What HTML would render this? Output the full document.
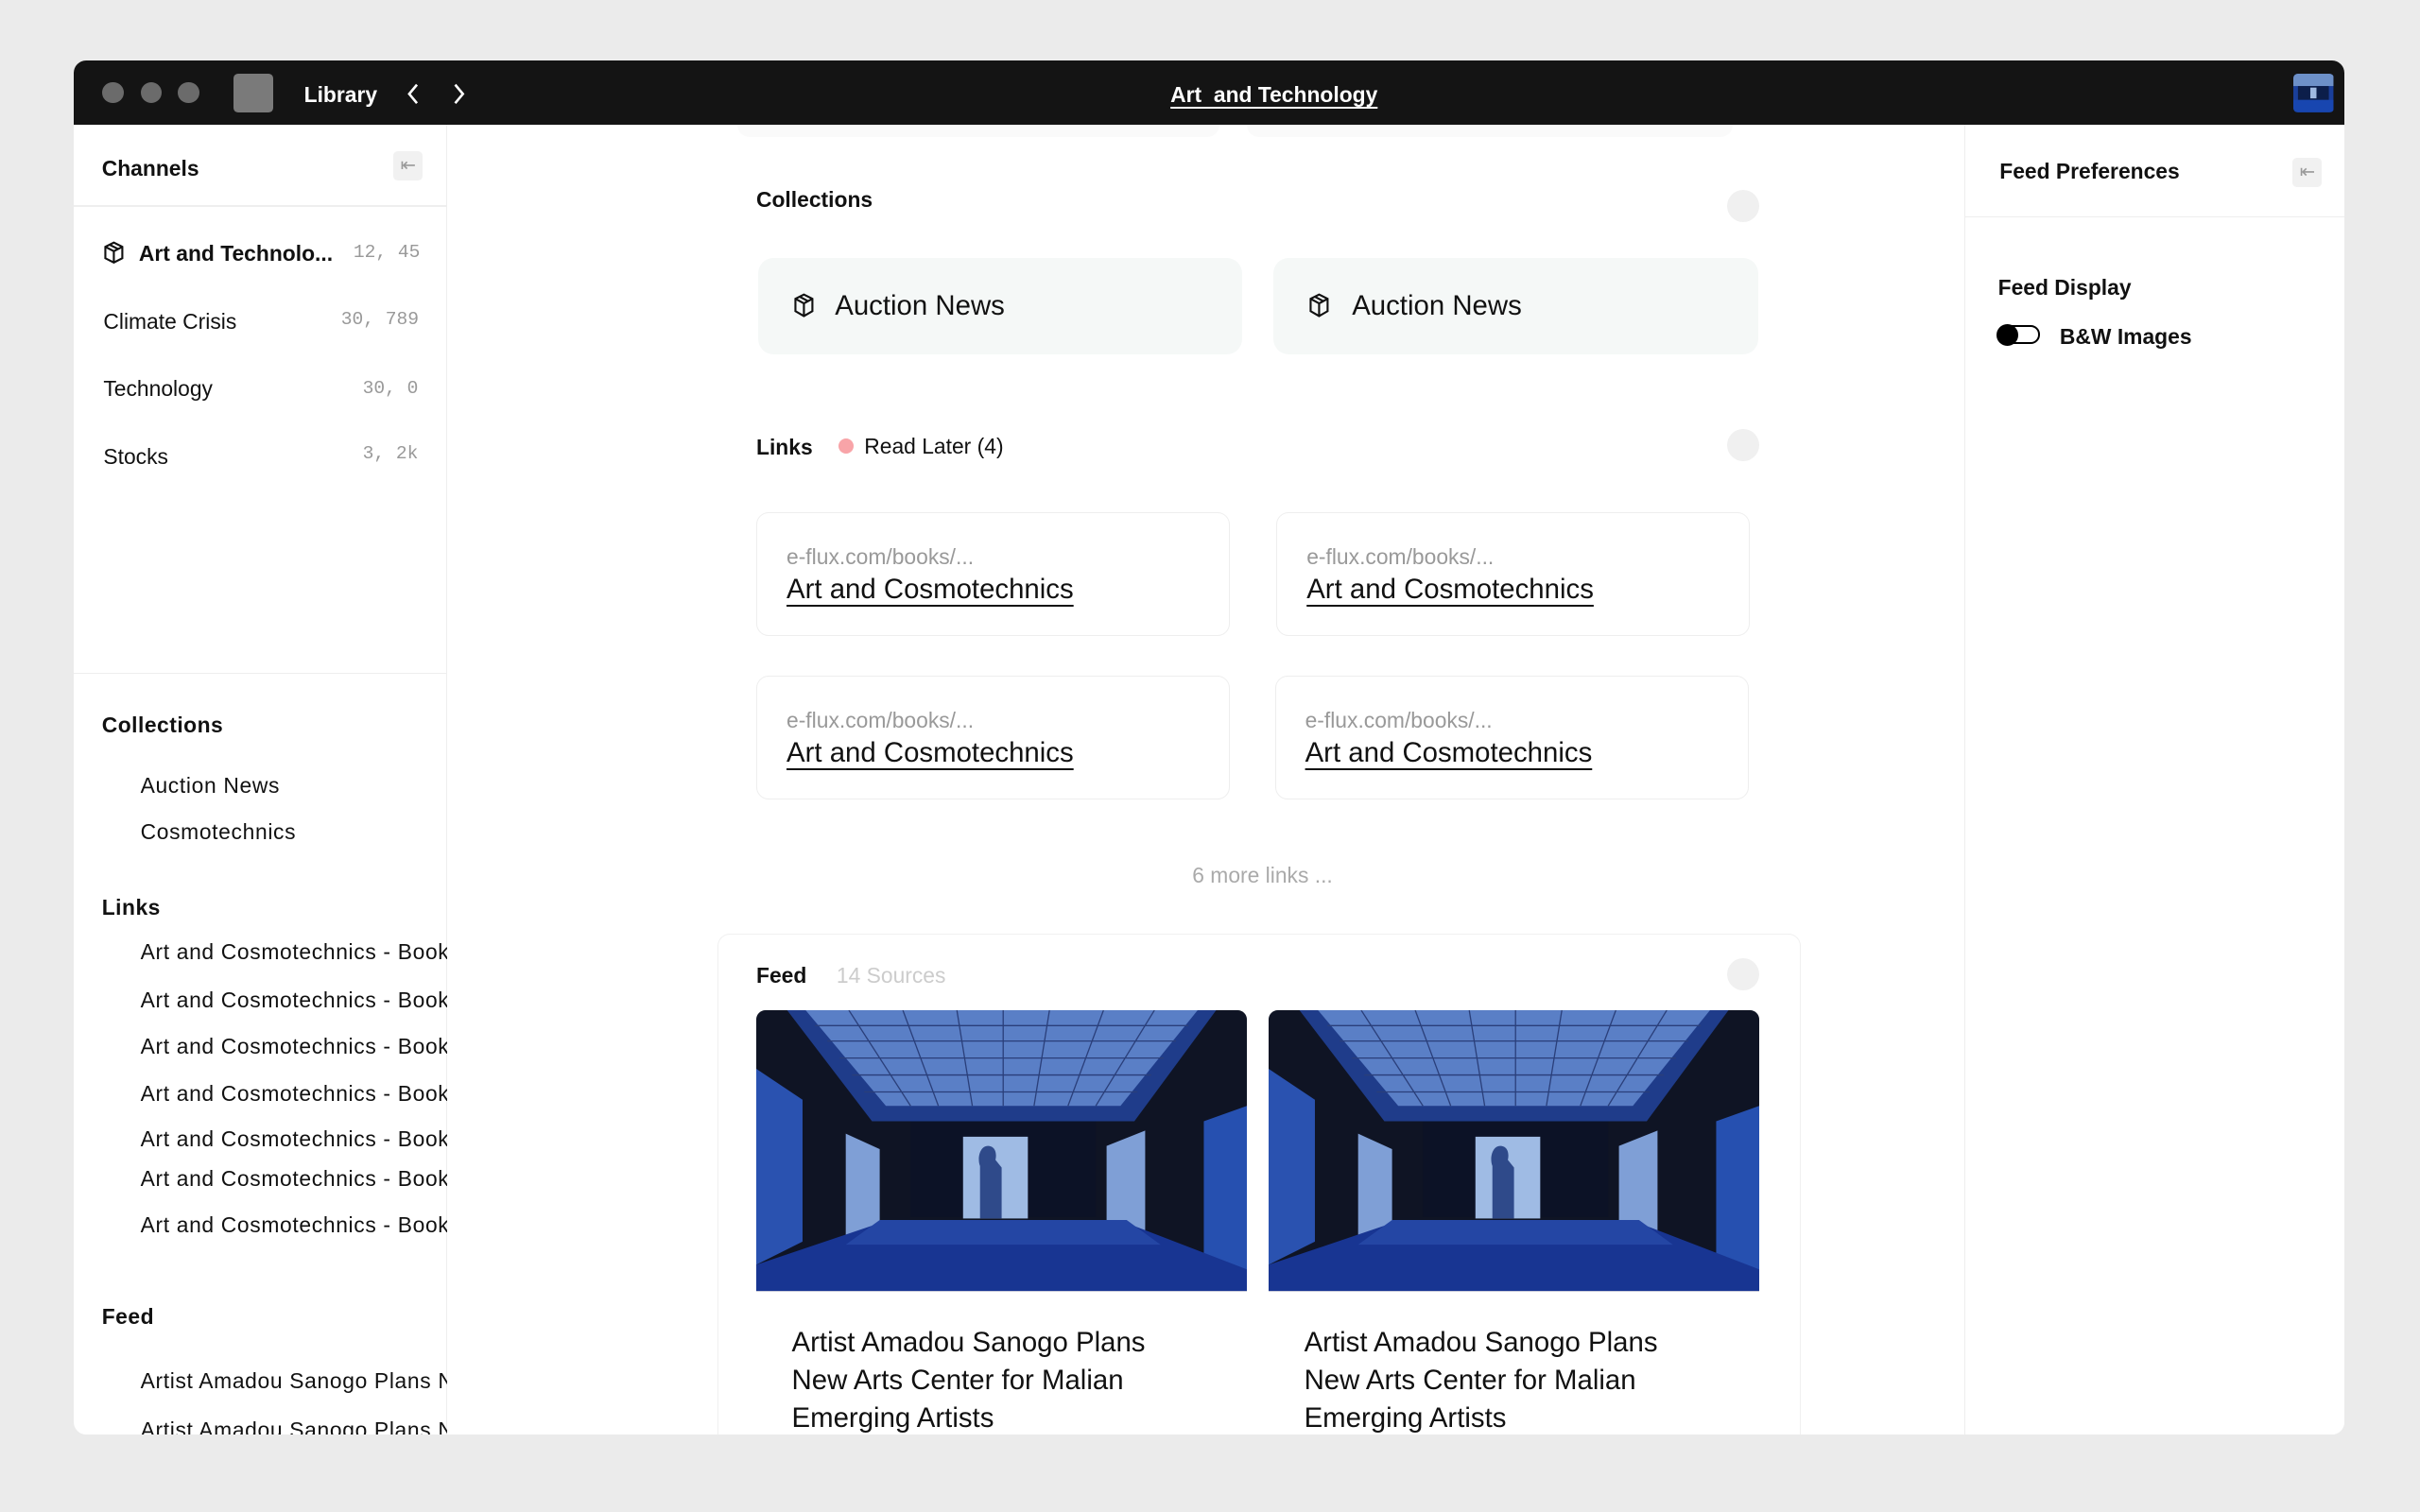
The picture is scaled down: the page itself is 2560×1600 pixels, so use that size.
<!DOCTYPE html>
<html><head><meta charset="utf-8">
<style>
*{margin:0;padding:0;box-sizing:border-box}
html,body{width:2560px;height:1600px;overflow:hidden;background:#ebebeb}
#s{width:1568px;height:980px;zoom:1.632653;position:relative;font-family:"Liberation Sans",sans-serif;color:#111}
.a{position:absolute}
.win{left:48px;top:39px;width:1471px;height:891px;background:#fff;border-radius:8px;overflow:hidden}
.bar{left:0;top:0;width:1471px;height:42px;background:#141414}
.dot{width:14px;height:14px;border-radius:50%;background:#6b6b6b;top:14px}
.b{font-weight:bold}
.mono{font-family:"Liberation Mono",monospace;color:#999;font-size:12px}
.colbox{background:#f5f8f7;border-radius:10px;width:314px;height:63px}
.lnk{border:1px solid #eee;border-radius:8px;width:307px;height:80px}
.url{font-size:14px;color:#999;left:19px;top:20px}
.tt{font-size:18px;left:19px;top:39px;text-decoration:underline;text-underline-offset:4px}
.circ{width:21px;height:21px;border-radius:50%;background:#f0f0f0}
.sl{font-size:14px;letter-spacing:.4px;left:43px}
.ft{font-size:18px;line-height:24.5px}
.btn{width:19px;height:19px;background:#f1f1f1;border-radius:3px;color:#999;font-size:12px;text-align:center;line-height:19px}
</style></head><body><div id="s">
<div class="a win">
 <div class="a bar">
  <div class="a dot" style="left:18px"></div><div class="a dot" style="left:43px"></div><div class="a dot" style="left:67px"></div>
  <div class="a" style="left:103px;top:9px;width:26px;height:25px;background:#7a7a7a;border-radius:3px"></div>
  <div class="a b" style="left:149px;top:14px;color:#fff;font-size:14px">Library</div>
  <svg class="a" style="left:214px;top:15px" width="12" height="14" viewBox="0 0 12 14"><path d="M8 1 3 7l5 6" fill="none" stroke="#fff" stroke-width="1.6"/></svg>
  <svg class="a" style="left:243px;top:15px" width="12" height="14" viewBox="0 0 12 14"><path d="M4 1l5 6-5 6" fill="none" stroke="#fff" stroke-width="1.6"/></svg>
  <div class="a b" style="left:0;width:1555px;text-align:center;top:14px;color:#fff;font-size:14px;text-decoration:underline;text-underline-offset:3px">Art&nbsp; and Technology</div>
  <svg class="a" style="left:1438px;top:9px;border-radius:3px" width="26" height="25" viewBox="0 0 26 25"><rect width="26" height="25" fill="#1a3f9a"/><rect width="26" height="8" fill="#6d90c8"/><rect x="3" y="8" width="20" height="9" fill="#0c1e4a"/><rect x="11" y="9" width="4" height="7" fill="#9fb9e0"/><rect x="0" y="17" width="26" height="8" fill="#1846b0"/></svg>
 </div>
 <!-- left sidebar -->
 <div class="a" style="left:0;top:42px;width:242px;height:849px;border-right:1px solid #eee">
  <div class="a b" style="left:18px;top:20px;font-size:14px">Channels</div>
  <div class="a btn" style="left:207px;top:17px">&#8676;</div>
  <div class="a" style="left:0;top:52px;width:242px;height:1px;background:#eee"></div>
  <svg class="a" style="left:19px;top:75px" width="14" height="15" viewBox="0 0 14 15"><path d="M7 1 1.5 3.8v7.4L7 14l5.5-2.8V3.8z M1.5 3.8 7 6.6l5.5-2.8 M7 6.6V14 M4.2 2.4l5.5 2.8" fill="none" stroke="#111" stroke-width="1.3"/></svg>
  <div class="a b" style="left:42px;top:75px;font-size:14px">Art and Technolo...</div>
  <div class="a mono" style="left:181px;top:76px">12, 45</div>
  <div class="a" style="left:19px;top:119px;font-size:14px">Climate Crisis</div><div class="a mono" style="left:173px;top:119px">30, 789</div>
  <div class="a" style="left:19px;top:163px;font-size:14px">Technology</div><div class="a mono" style="left:187px;top:164px">30, 0</div>
  <div class="a" style="left:19px;top:207px;font-size:14px">Stocks</div><div class="a mono" style="left:187px;top:206px">3, 2k</div>
  <div class="a" style="left:0;top:355px;width:242px;height:1px;background:#eee"></div>
  <div class="a b" style="left:18px;top:381px;font-size:14px;letter-spacing:.3px">Collections</div>
  <div class="a sl" style="top:420px">Auction News</div>
  <div class="a sl" style="top:450px">Cosmotechnics</div>
  <div class="a b" style="left:18px;top:499px;font-size:14px;letter-spacing:.3px">Links</div>
  <div class="a sl" style="top:528px;white-space:nowrap">Art and Cosmotechnics - Books</div>
  <div class="a sl" style="top:559px;white-space:nowrap">Art and Cosmotechnics - Books</div>
  <div class="a sl" style="top:589px;white-space:nowrap">Art and Cosmotechnics - Books</div>
  <div class="a sl" style="top:620px;white-space:nowrap">Art and Cosmotechnics - Books</div>
  <div class="a sl" style="top:649px;white-space:nowrap">Art and Cosmotechnics - Books</div>
  <div class="a sl" style="top:675px;white-space:nowrap">Art and Cosmotechnics - Books</div>
  <div class="a sl" style="top:705px;white-space:nowrap">Art and Cosmotechnics - Books</div>
  <div class="a b" style="left:18px;top:764px;font-size:14px;letter-spacing:.3px">Feed</div>
  <div class="a sl" style="top:806px;white-space:nowrap">Artist Amadou Sanogo Plans New</div>
  <div class="a sl" style="top:838px;white-space:nowrap">Artist Amadou Sanogo Plans New</div>
  <div class="a" style="left:242px;top:0;width:60px;height:849px;background:#fff"></div>
 </div>
 <!-- main -->
 <div class="a" style="left:430px;top:42px;width:312px;height:8px;background:#fafafa;border-radius:0 0 8px 8px"></div>
 <div class="a" style="left:760px;top:42px;width:315px;height:8px;background:#fafafa;border-radius:0 0 8px 8px"></div>
 <div class="a b" style="left:442px;top:82px;font-size:14px">Collections</div>
 <div class="a circ" style="left:1071px;top:84px"></div>
 <div class="a colbox" style="left:443px;top:128px"></div>
 <div class="a colbox" style="left:777px;top:128px"></div>
 <svg class="a" style="left:466px;top:151px" width="14" height="16" viewBox="0 0 14 16"><path d="M7 1 1.5 3.8v8L7 15l5.5-3.2v-8z M1.5 3.8 7 6.8l5.5-3 M7 6.8V15 M4.2 2.4l5.5 2.9" fill="none" stroke="#111" stroke-width="1.3"/></svg>
 <div class="a" style="left:493px;top:149px;font-size:18px">Auction News</div>
 <svg class="a" style="left:800px;top:151px" width="14" height="16" viewBox="0 0 14 16"><path d="M7 1 1.5 3.8v8L7 15l5.5-3.2v-8z M1.5 3.8 7 6.8l5.5-3 M7 6.8V15 M4.2 2.4l5.5 2.9" fill="none" stroke="#111" stroke-width="1.3"/></svg>
 <div class="a" style="left:828px;top:149px;font-size:18px">Auction News</div>
 <div class="a b" style="left:442px;top:243px;font-size:14px">Links</div>
 <div class="a" style="left:495px;top:245px;width:10px;height:10px;border-radius:50%;background:#f8a4a8"></div>
 <div class="a" style="left:512px;top:242px;font-size:14px">Read Later (4)</div>
 <div class="a circ" style="left:1071px;top:239px"></div>
 <div class="a lnk" style="left:442px;top:293px"><div class="a url">e-flux.com/books/...</div><div class="a tt">Art and Cosmotechnics</div></div>
 <div class="a lnk" style="left:779px;top:293px"><div class="a url">e-flux.com/books/...</div><div class="a tt">Art and Cosmotechnics</div></div>
 <div class="a lnk" style="left:442px;top:399px"><div class="a url">e-flux.com/books/...</div><div class="a tt">Art and Cosmotechnics</div></div>
 <div class="a lnk" style="left:778px;top:399px"><div class="a url">e-flux.com/books/...</div><div class="a tt">Art and Cosmotechnics</div></div>
 <div class="a" style="left:0;width:1540px;text-align:center;top:520px;font-size:14px;color:#aaa">6 more links ...</div>
 <div class="a" style="left:417px;top:566px;width:702px;height:340px;border:1px solid #f0f0f0;border-radius:8px"></div>
 <div class="a b" style="left:442px;top:585px;font-size:14px">Feed</div>
 <div class="a" style="left:494px;top:585px;font-size:14px;color:#ccc">14 Sources</div>
 <div class="a circ" style="left:1071px;top:582px"></div>
 <svg width="0" height="0" style="position:absolute"><defs><g id="room">
  <rect width="318" height="182" fill="#0f1424"/>
  <polygon points="20,0 298,0 245,72 75,72" fill="#1f3c8a"/>
  <polygon points="32,0 286,0 236,62 84,62" fill="#5a7fc6"/>
  <g stroke="#2a3f7a" stroke-width="0.8">
   <line x1="60" y1="0" x2="100" y2="62"/><line x1="95" y1="0" x2="118" y2="62"/><line x1="130" y1="0" x2="140" y2="62"/><line x1="160" y1="0" x2="160" y2="62"/><line x1="190" y1="0" x2="180" y2="62"/><line x1="225" y1="0" x2="202" y2="62"/><line x1="258" y1="0" x2="220" y2="62"/>
   <line x1="38" y1="10" x2="280" y2="10"/><line x1="46" y1="20" x2="272" y2="20"/><line x1="54" y1="31" x2="264" y2="31"/><line x1="62" y1="42" x2="256" y2="42"/><line x1="70" y1="53" x2="247" y2="53"/>
  </g>
  <rect x="100" y="72" width="120" height="62" fill="#0c1226"/>
  <rect x="134" y="82" width="42" height="53" fill="#9fbbe4"/>
  <path d="M150 88c5 0 6 5 5 9l4 5v33h-14v-34c-2-5 0-13 5-13z" fill="#2f4a8a"/>
  <polygon points="0,38 30,58 30,150 0,165" fill="#2a52b0"/>
  <polygon points="58,80 80,90 80,140 58,150" fill="#7f9fd6"/>
  <polygon points="227,88 252,78 252,150 227,140" fill="#7f9fd6"/>
  <polygon points="290,72 318,62 318,182 290,170" fill="#2650b0"/>
  <polygon points="0,182 0,165 80,138 240,138 318,168 318,182" fill="#183592"/>
  <polygon points="80,136 240,136 262,152 58,152" fill="#2446a4"/>
 </g></defs></svg>
 <svg class="a" style="left:442px;top:616px;border-radius:6px 6px 0 0" width="318" height="182" viewBox="0 0 318 182"><use href="#room"/></svg>
 <svg class="a" style="left:774px;top:616px;border-radius:6px 6px 0 0" width="318" height="182" viewBox="0 0 318 182"><use href="#room"/></svg>
 <div class="a ft" style="left:465px;top:819px">Artist Amadou Sanogo Plans<br>New Arts Center for Malian<br>Emerging Artists</div>
 <div class="a ft" style="left:797px;top:819px">Artist Amadou Sanogo Plans<br>New Arts Center for Malian<br>Emerging Artists</div>
 <!-- right panel -->
 <div class="a" style="left:1225px;top:42px;width:246px;height:849px;border-left:1px solid #eee;background:#fff">
  <div class="a b" style="left:22px;top:22px;font-size:14px">Feed Preferences</div>
  <div class="a btn" style="left:212px;top:21px">&#8676;</div>
  <div class="a" style="left:0;top:59px;width:246px;height:1px;background:#eee"></div>
  <div class="a b" style="left:21px;top:97px;font-size:14px">Feed Display</div>
  <div class="a" style="left:21px;top:130px;width:27px;height:12px;border:1.5px solid #000;border-radius:6px"></div>
  <div class="a" style="left:20px;top:129px;width:14px;height:14px;border-radius:50%;background:#000"></div>
  <div class="a b" style="left:61px;top:129px;font-size:14px">B&amp;W Images</div>
 </div>
</div>
</div></body></html>
